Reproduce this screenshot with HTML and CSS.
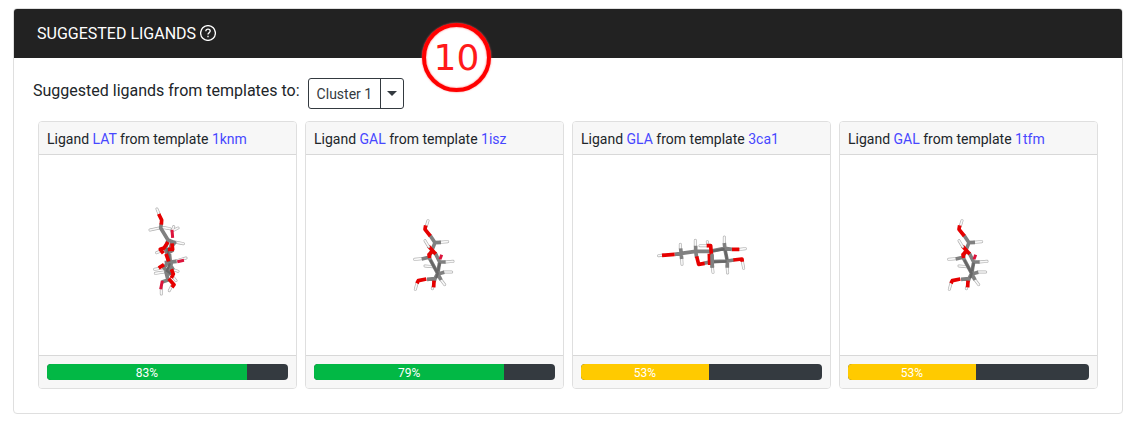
FILE: index.html
```html
<!DOCTYPE html>
<html lang="en">
<head>
<meta charset="utf-8">
<title>Suggested ligands</title>
<link rel="stylesheet" href="styles.css">
</head>
<body>
<section class="panel">
  <header class="panel-header">
    <h1 class="panel-title">SUGGESTED LIGANDS</h1>
    <button class="help" type="button" aria-label="Help">
      <svg class="help-icon" viewBox="0 0 16 16" aria-hidden="true">
        <circle cx="8" cy="8" r="7.4"/>
        <path d="M5.8 6.2C5.9 4.8 6.8 4.2 8 4.2s2.2.7 2.2 1.9c0 .9-.6 1.3-1.2 1.8-.7.5-1 .8-1 1.6"/>
        <path d="M8 10.8v1.4"/>
      </svg>
    </button>
  </header>
  <span class="step">10</span>
  <div class="panel-body">
    <div class="picker">
      <span class="picker-label" id="picker-label">Suggested ligands from templates to:</span>
      <div class="split" role="group" aria-labelledby="picker-label">
        <button class="split-main" type="button">Cluster 1</button>
        <button class="split-toggle" type="button" aria-label="Choose cluster" aria-haspopup="true"><span class="caret"></span></button>
      </div>
    </div>
    <div class="cards">
      <article class="card">
        <h2 class="card-header">Ligand <a href="#LAT">LAT</a> from template <a href="#1knm">1knm</a></h2>
        <div class="card-stage">
          <svg class="molecule" viewBox="0 0 257 200" role="img" aria-label="LAT structure">
            <g transform="translate(101 45) scale(.3333)">
              <path class="h-edge" d="M58 44L51 27M58 84L30 90M66 82L90 86M96 94L101 80M98 92L114 84M104 126L130 131M74 148L50 158M104 184L138 174M66 204L44 208M72 216L46 220M92 206L114 214M64 262L64 282M96 256L88 272M100 232L108 242"/>
              <path class="h" d="M58 44L51 27M58 84L30 90M66 82L90 86M96 94L101 80M98 92L114 84M104 126L130 131M74 148L50 158M104 184L138 174M66 204L44 208M72 216L46 220M92 206L114 214M64 262L64 282M96 256L88 272M100 232L108 242"/>
              <path class="c" d="M64 70L62 84L84 120L104 128L88 148L84 184L98 206L78 216L84 240L66 246M84 120L76 146L88 180L72 204L92 224M96 124L88 158L92 196M82 160L100 150M74 188L110 184M94 190L84 226"/>
              <path class="c-dark" d="M82 144L88 186M90 190L80 214M78 210L96 224"/>
              <path class="o" d="M56 42L65 60L64 74M84 126L72 144L61 148L70 160M96 130L98 148L84 148M78 162L86 184M72 194L56 204M94 208L100 222L94 234M86 236L102 254L96 262"/>
              <path class="o-alt" d="M96 90L98 114M112 185L132 181M67 242L62 268"/>
            </g>
          </svg>
        </div>
        <footer class="card-footer">
          <div class="progress" role="progressbar" aria-label="LAT score" aria-valuenow="83" aria-valuemin="0" aria-valuemax="100"><div class="bar bar-good" style="width:83%">83%</div></div>
        </footer>
      </article>
      <article class="card">
        <h2 class="card-header">Ligand <a href="#GAL">GAL</a> from template <a href="#1isz">1isz</a></h2>
        <div class="card-stage">
          <svg class="molecule" viewBox="0 0 257 200" role="img" aria-label="GAL structure">
            <g id="gal" transform="translate(99 55) scale(.3333)">
              <path class="h-edge" d="M64 48L69 32M104 97L128 95M50 146L29 148M60 168L84 170M120 156L144 154M116 186L140 186M104 204L119 224M37 216L31 238M84 230L82 236"/>
              <path class="h" d="M64 48L69 32M104 97L128 95M50 146L29 148M60 168L84 170M120 156L144 154M116 186L140 186M104 204L119 224M37 216L31 238M84 230L82 236"/>
              <path class="c" d="M75 76L90 98L72 142L98 190L90 206L66 208M90 98L108 97M72 142L50 147M90 128L104 156L98 192L118 187M104 156L122 156M98 190L108 210M90 206L87 216"/>
              <path class="c-dark" d="M76 150L98 190L94 204M104 158L99 184"/>
              <path class="o" d="M62 46L60 58L76 78M84 122L72 134L74 144M70 108L92 132M64 207L40 212L36 220M87 212L86 232"/>
              <path class="o-alt" d="M105 148L110 134"/>
              <path class="h-edge" d="M60 92L71 110"/>
              <path class="h" d="M60 92L71 110"/>
            </g>
          </svg>
        </div>
        <footer class="card-footer">
          <div class="progress" role="progressbar" aria-label="GAL score" aria-valuenow="79" aria-valuemin="0" aria-valuemax="100"><div class="bar bar-good" style="width:79%">79%</div></div>
        </footer>
      </article>
      <article class="card">
        <h2 class="card-header">Ligand <a href="#GLA">GLA</a> from template <a href="#3ca1">3ca1</a></h2>
        <div class="card-stage">
          <svg class="molecule" viewBox="0 0 257 200" role="img" aria-label="GLA structure">
            <g transform="translate(77 70) scale(.3333)">
              <path class="h-edge" d="M91 72L91 58M95 98L96 118M136 64L136 46M174 62L172 50M172 62L150 62M223 56L223 36M270 73L286 71M277 108L281 130M187 124L189 142M231 122L233 144M40 90L26 92"/>
              <path class="h" d="M91 72L91 58M95 98L96 118M136 64L136 46M174 62L172 50M172 62L150 62M223 56L223 36M270 73L286 71M277 108L281 130M187 124L189 142M231 122L233 144M40 90L26 92"/>
              <path class="c" d="M74 88L94 85L137 79L180 79L224 70L246 73M137 62L137 79L140 98M92 70L95 102M223 54L225 74L232 108L252 105M232 108L232 128M162 115L186 110L232 108M184 78L187 128"/>
              <path class="c-dark" d="M178 80L224 72M184 111L230 109M226 76L231 104"/>
              <path class="o" d="M36 91L74 88M140 94L146 118L164 115M170 62L182 62L184 86M178 86L179 120M246 73L268 73M250 105L276 102L277 110"/>
              <path class="c" d="M186 88L187 128"/>
            </g>
          </svg>
        </div>
        <footer class="card-footer">
          <div class="progress" role="progressbar" aria-label="GLA score" aria-valuenow="53" aria-valuemin="0" aria-valuemax="100"><div class="bar bar-fair" style="width:53%">53%</div></div>
        </footer>
      </article>
      <article class="card">
        <h2 class="card-header">Ligand <a href="#GAL">GAL</a> from template <a href="#1tfm">1tfm</a></h2>
        <div class="card-stage">
          <svg class="molecule" viewBox="0 0 257 200" role="img" aria-label="GAL structure"><use href="#gal"/></svg>
        </div>
        <footer class="card-footer">
          <div class="progress" role="progressbar" aria-label="GAL score" aria-valuenow="53" aria-valuemin="0" aria-valuemax="100"><div class="bar bar-fair" style="width:53%">53%</div></div>
        </footer>
      </article>
    </div>
  </div>
</section>
</body>
</html>
```

FILE: styles.css
```css
*, *::before, *::after { box-sizing: border-box; }

body {
  margin: 0;
  padding: 8px 5px 14px 13px;
  background: #fff;
  color: #212529;
  font: 16px/24px Roboto, sans-serif;
}

button { font: inherit; cursor: pointer; }

.panel {
  position: relative;
  border: 1px solid #dfdfdf;
  border-radius: 4px;
}

.panel-header {
  display: flex;
  align-items: center;
  gap: 4px;
  padding: 13px 23px 12px;
  border-radius: 3px 3px 0 0;
  background: #222;
  color: #fff;
}

.panel-title { margin: 0; font-size: 16px; font-weight: 400; }

.help {
  display: flex;
  padding: 0 0 2px;
  border: 0;
  background: none;
  color: inherit;
}

.help-icon {
  width: 16px;
  height: 16px;
  fill: none;
  stroke: currentColor;
  stroke-width: 1.3;
}

/* Step marker laid over the header edge */
.step {
  position: absolute;
  top: 14px;
  left: 408px;
  display: flex;
  align-items: center;
  justify-content: center;
  width: 69px;
  height: 69px;
  border: 4px solid #f00;
  border-radius: 50%;
  background: #fff;
  box-shadow: 0 0 2px #f66, inset 0 0 2px #f66;
  color: #ff1a1a;
  font: 36px/36px "DejaVu Sans", sans-serif;
}

.panel-body { padding: 20px 24px 24px; }

.picker {
  display: flex;
  align-items: flex-start;
  gap: 8px;
  margin: 0 0 12px -5px;
}

.picker-label { padding-top: 1px; }

.split {
  display: flex;
  border: 1px solid #343a40;
  border-radius: 3px;
}

.split-main, .split-toggle {
  border: 0;
  background: none;
  color: #343a40;
  font-size: 14px;
  line-height: 21px;
}

.split-main { padding: 5px 8px 3px; }

.split-toggle {
  display: flex;
  align-items: center;
  padding: 0 6px;
  border-left: 1px solid #343a40;
}

.caret {
  border-top: 5px solid currentColor;
  border-right: 5px solid transparent;
  border-left: 5px solid transparent;
}

.cards {
  display: grid;
  grid-template-columns: repeat(4, minmax(0, 1fr));
  gap: 8px;
}

.card {
  border: 1px solid #dfdfdf;
  border-radius: 4px;
}

.card-header {
  margin: 0;
  padding: 7px 8px 4px;
  border-bottom: 1px solid #d8d8d8;
  border-radius: 3px 3px 0 0;
  background: #f7f7f7;
  font-size: 14px;
  font-weight: 400;
  line-height: 21px;
}

a { color: #4747ff; text-decoration: none; }

.molecule { display: block; width: 100%; height: 200px; }

.molecule path { fill: none; stroke-linejoin: round; }
.h-edge { stroke: #b0b0b0; stroke-width: 9; stroke-linecap: round; }
.h { stroke: #f8f8f8; stroke-width: 5; stroke-linecap: round; }
.c { stroke: #808080; stroke-width: 11; }
.c-dark { stroke: #666; stroke-width: 7; }
.o { stroke: #e60000; stroke-width: 11; }
.o-alt { stroke: #dc143c; stroke-width: 9; }

.card-footer {
  padding: 8px;
  border-top: 1px solid #d8d8d8;
  border-radius: 0 0 3px 3px;
  background: #f7f7f7;
}

.progress {
  display: flex;
  height: 16px;
  overflow: hidden;
  border-radius: 4px;
  background: #343a40;
}

.bar {
  color: #fff;
  font-size: 12px;
  line-height: 18px;
  text-align: center;
}

.bar-good { background: #02b845; }
.bar-fair { background: #ffca00; }
```
